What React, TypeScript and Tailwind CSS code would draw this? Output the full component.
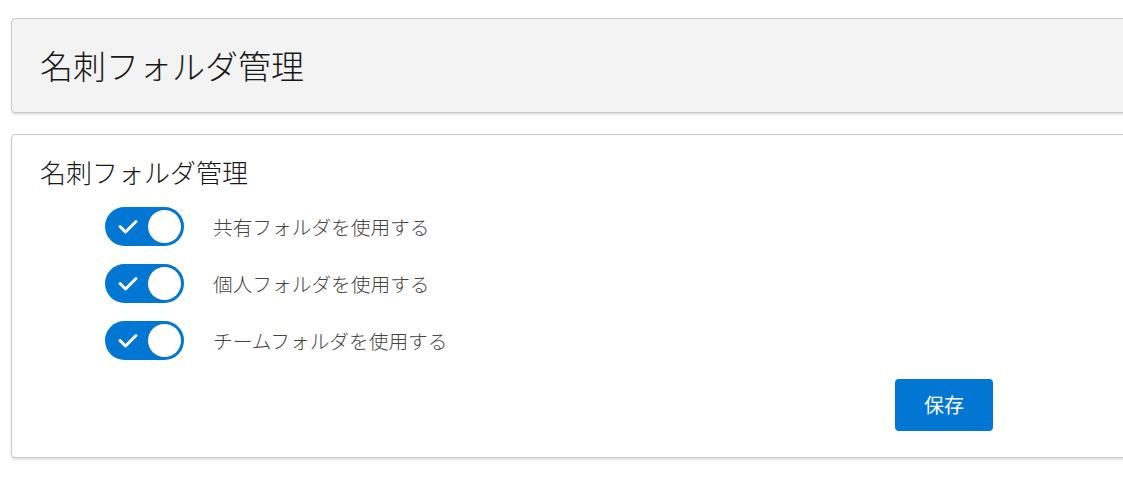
import React, { useState } from 'react';

const FONT = '"Noto Sans CJK JP", "Noto Sans", sans-serif';

type Item = { id: string; label: string };

const items: Item[] = [
  { id: 'shared', label: '共有フォルダを使用する' },
  { id: 'personal', label: '個人フォルダを使用する' },
  { id: 'team', label: 'チームフォルダを使用する' },
];

function Toggle({ on, onChange }: { on: boolean; onChange: () => void }) {
  return (
    <button
      type="button"
      onClick={onChange}
      className={`relative w-[79px] h-[39px] rounded-full shrink-0 ${on ? 'bg-[#0176d3]' : 'bg-[#c9c9c9]'}`}
    >
      {on && (
        <svg className="absolute left-[12px] top-[11px]" width="22" height="17" viewBox="0 0 22 17">
          <path d="M3 8.5l5.5 5.5L19 3.5" fill="none" stroke="#fff" strokeWidth="3" strokeLinecap="round" strokeLinejoin="round" />
        </svg>
      )}
      <span
        className={`absolute top-[3px] w-[33px] h-[33px] rounded-full bg-white ${on ? 'right-[3px]' : 'left-[3px]'}`}
      />
    </button>
  );
}

export default function App() {
  const [state, setState] = useState<Record<string, boolean>>({ shared: true, personal: true, team: true });

  return (
    <div className="w-[1123px] h-[482px] overflow-hidden bg-white pl-[11px] pt-[18px]" style={{ fontFamily: FONT }}>
      <div className="w-[1130px] flex flex-col gap-[21px]">
        {/* header */}
        <div className="h-[95px] bg-[#f3f3f3] border border-[#c9c9c9] rounded-[4px] shadow-[0_2px_2px_rgba(0,0,0,0.1)] flex items-center pl-[28px]">
          <h1 className="text-[33px] leading-[33px] text-[#181818] font-light">名刺フォルダ管理</h1>
        </div>

        {/* card */}
        <div className="h-[324px] bg-white border border-[#c9c9c9] rounded-[4px] shadow-[0_2px_2px_rgba(0,0,0,0.1)] pl-[28px] pt-[24px]">
          <h2 className="text-[26px] leading-[26px] text-[#181818] font-light">名刺フォルダ管理</h2>
          <div className="flex flex-col gap-[18px] mt-[22px] pl-[65px]">
            {items.map((it) => (
              <div key={it.id} className="flex items-center gap-[29px] h-[39px]">
                <Toggle on={state[it.id]} onChange={() => setState((s) => ({ ...s, [it.id]: !s[it.id] }))} />
                <span className="text-[19.7px] text-[#444444] font-light">{it.label}</span>
              </div>
            ))}
          </div>
          <div className="mt-[19px] pl-[855px]">
            <button type="button" className="w-[98px] h-[52px] rounded-[4px] bg-[#0176d3] text-white text-[20px]">
              保存
            </button>
          </div>
        </div>
      </div>
    </div>
  );
}
